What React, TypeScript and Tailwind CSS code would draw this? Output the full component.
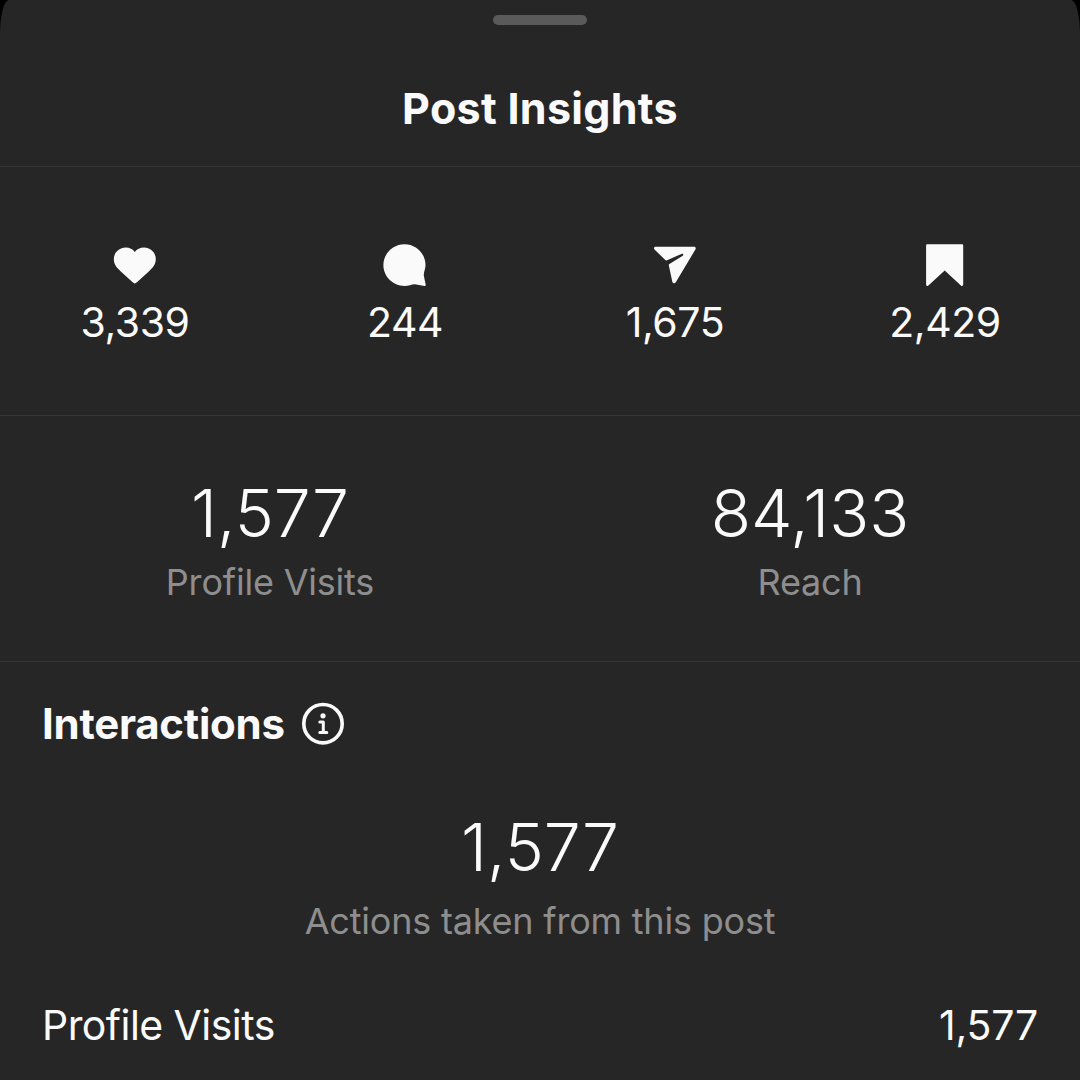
import type { ReactNode } from 'react'

function HeartIcon() {
  return (
    <svg width="44" height="44" viewBox="0 0 44 44" fill="currentColor">
      <path d="M12.6 3.5C6.2 3.5 .8 8.6 .8 15.1C.8 20.5 4 24.1 7.8 27.5L19.4 38.1C20.4 39 21 39.5 21.8 39.5C22.6 39.5 23.2 39 24.2 38.1L35.8 27.5C39.6 24.1 42.8 20.5 42.8 15.1C42.8 8.6 37.6 3.5 31.2 3.5C27 3.5 23.9 5.1 21.8 8.1C19.7 5.1 16.8 3.5 12.6 3.5Z" />
    </svg>
  )
}

function CommentIcon() {
  return (
    <svg width="44" height="44" viewBox="0 0 44 44" fill="currentColor">
      <path d="M21.5.2C9.8.2.4 9.6.4 21.1S9.8 42 21.5 42C25.2 42 28.6 40.2 31.8 40.2L41.6 41.9C42.4 42 42.9 41.6 42.7 40.8L40.8 31.4C40.6 28.4 42.5 25 42.5 21.1C42.5 9.6 33.2.2 21.5.2Z" />
    </svg>
  )
}

function ShareIcon() {
  return (
    <svg width="44" height="44" viewBox="0 0 44 44" fill="currentColor">
      <path d="M2.6 2.8H41C42.6 2.8 43.2 4.2 42.4 5.5L22.8 38.2C21.8 39.8 19.8 39.4 19.3 37.7L15.8 21.2C15.7 20.6 15.9 20.2 16.4 19.9L29.4 12.1C31 11.1 30.2 9.3 28.5 9.9L14.1 16.3C13.4 16.6 12.8 16.5 12.3 16L1.5 5.5C.4 4.4 1.1 2.8 2.6 2.8Z" />
    </svg>
  )
}

function SaveIcon() {
  return (
    <svg width="44" height="44" viewBox="0 0 44 44" fill="currentColor">
      <path d="M4.3.2H39C39.8.2 40.2.6 40.2 1.4V40.6C40.2 42.1 38.8 42.4 37.9 41.5L21.7 26.4L5.4 41.5C4.5 42.4 3.1 42.1 3.1 40.6V1.4C3.1.6 3.5.2 4.3.2Z" />
    </svg>
  )
}

function InfoIcon() {
  return (
    <svg width="44" height="44" viewBox="0 0 44 44" fill="none" stroke="currentColor">
      <circle cx="22" cy="21.7" r="19.2" strokeWidth="3.6" />
      <circle cx="22" cy="13.8" r="2.6" fill="currentColor" stroke="none" />
      <path d="M18.8 20H22.3V30.6M18.8 30.6H25.8" strokeWidth="3" strokeLinecap="round" strokeLinejoin="round" />
    </svg>
  )
}

const stats: { label: string; value: string; icon: ReactNode }[] = [
  { label: 'Likes', value: '3,339', icon: <HeartIcon /> },
  { label: 'Comments', value: '244', icon: <CommentIcon /> },
  { label: 'Shares', value: '1,675', icon: <ShareIcon /> },
  { label: 'Saves', value: '2,429', icon: <SaveIcon /> },
]

const totals = [
  { label: 'Profile Visits', value: '1,577' },
  { label: 'Reach', value: '84,133' },
]

export default function App() {
  return (
    <div className="h-[1080px] w-[1080px] overflow-hidden bg-black font-['Inter',sans-serif] text-[#fafafa]">
      <div className="flex h-full flex-col bg-[#262626] [border-radius:9px_9px_0_0/34px_34px_0_0]">
        <header className="flex h-[167px] shrink-0 flex-col items-center border-b border-[#363636] pt-[15px]">
          <div className="h-[10px] w-[94px] rounded-full bg-[#5a5a5a]" />
          <h1 className="mt-[57px] text-[43px] leading-[52px] font-bold tracking-[0.3px]">Post Insights</h1>
        </header>

        <section className="grid h-[249px] shrink-0 grid-cols-4 border-b border-[#363636] pt-[77px]">
          {stats.map((s) => (
            <div key={s.label} className="flex flex-col items-center" aria-label={s.label}>
              {s.icon}
              <span className="mt-[9px] text-[41px] leading-[50px] tracking-[-0.4px]">{s.value}</span>
            </div>
          ))}
        </section>

        <section className="grid h-[246px] shrink-0 grid-cols-2 border-b border-[#363636] pt-[57px]">
          {totals.map((t) => (
            <div key={t.label} className="flex flex-col items-center">
              <span className="text-[66px] leading-[80px] font-[330]">{t.value}</span>
              <span className="mt-[6px] text-[36px] leading-[46px] tracking-[-0.2px] text-[#8e8e8e]">{t.label}</span>
            </div>
          ))}
        </section>

        <section className="flex flex-col px-[42px] pt-[36px]">
          <div className="flex items-center gap-4">
            <h2 className="text-[42px] leading-[52px] font-bold tracking-[-0.25px]">Interactions</h2>
            <InfoIcon />
          </div>
          <div className="mt-[57px] flex flex-col items-center">
            <span className="text-[66px] leading-[80px] font-[330]">1,577</span>
            <span className="mt-[11px] text-[36px] leading-[46px] tracking-[-0.2px] text-[#8e8e8e]">
              Actions taken from this post
            </span>
          </div>
          <div className="mt-[55px] flex items-center justify-between text-[41px] leading-[52px]">
            <span className="tracking-[-0.55px]">Profile Visits</span>
            <span className="tracking-[-0.2px]">1,577</span>
          </div>
        </section>
      </div>
    </div>
  )
}
